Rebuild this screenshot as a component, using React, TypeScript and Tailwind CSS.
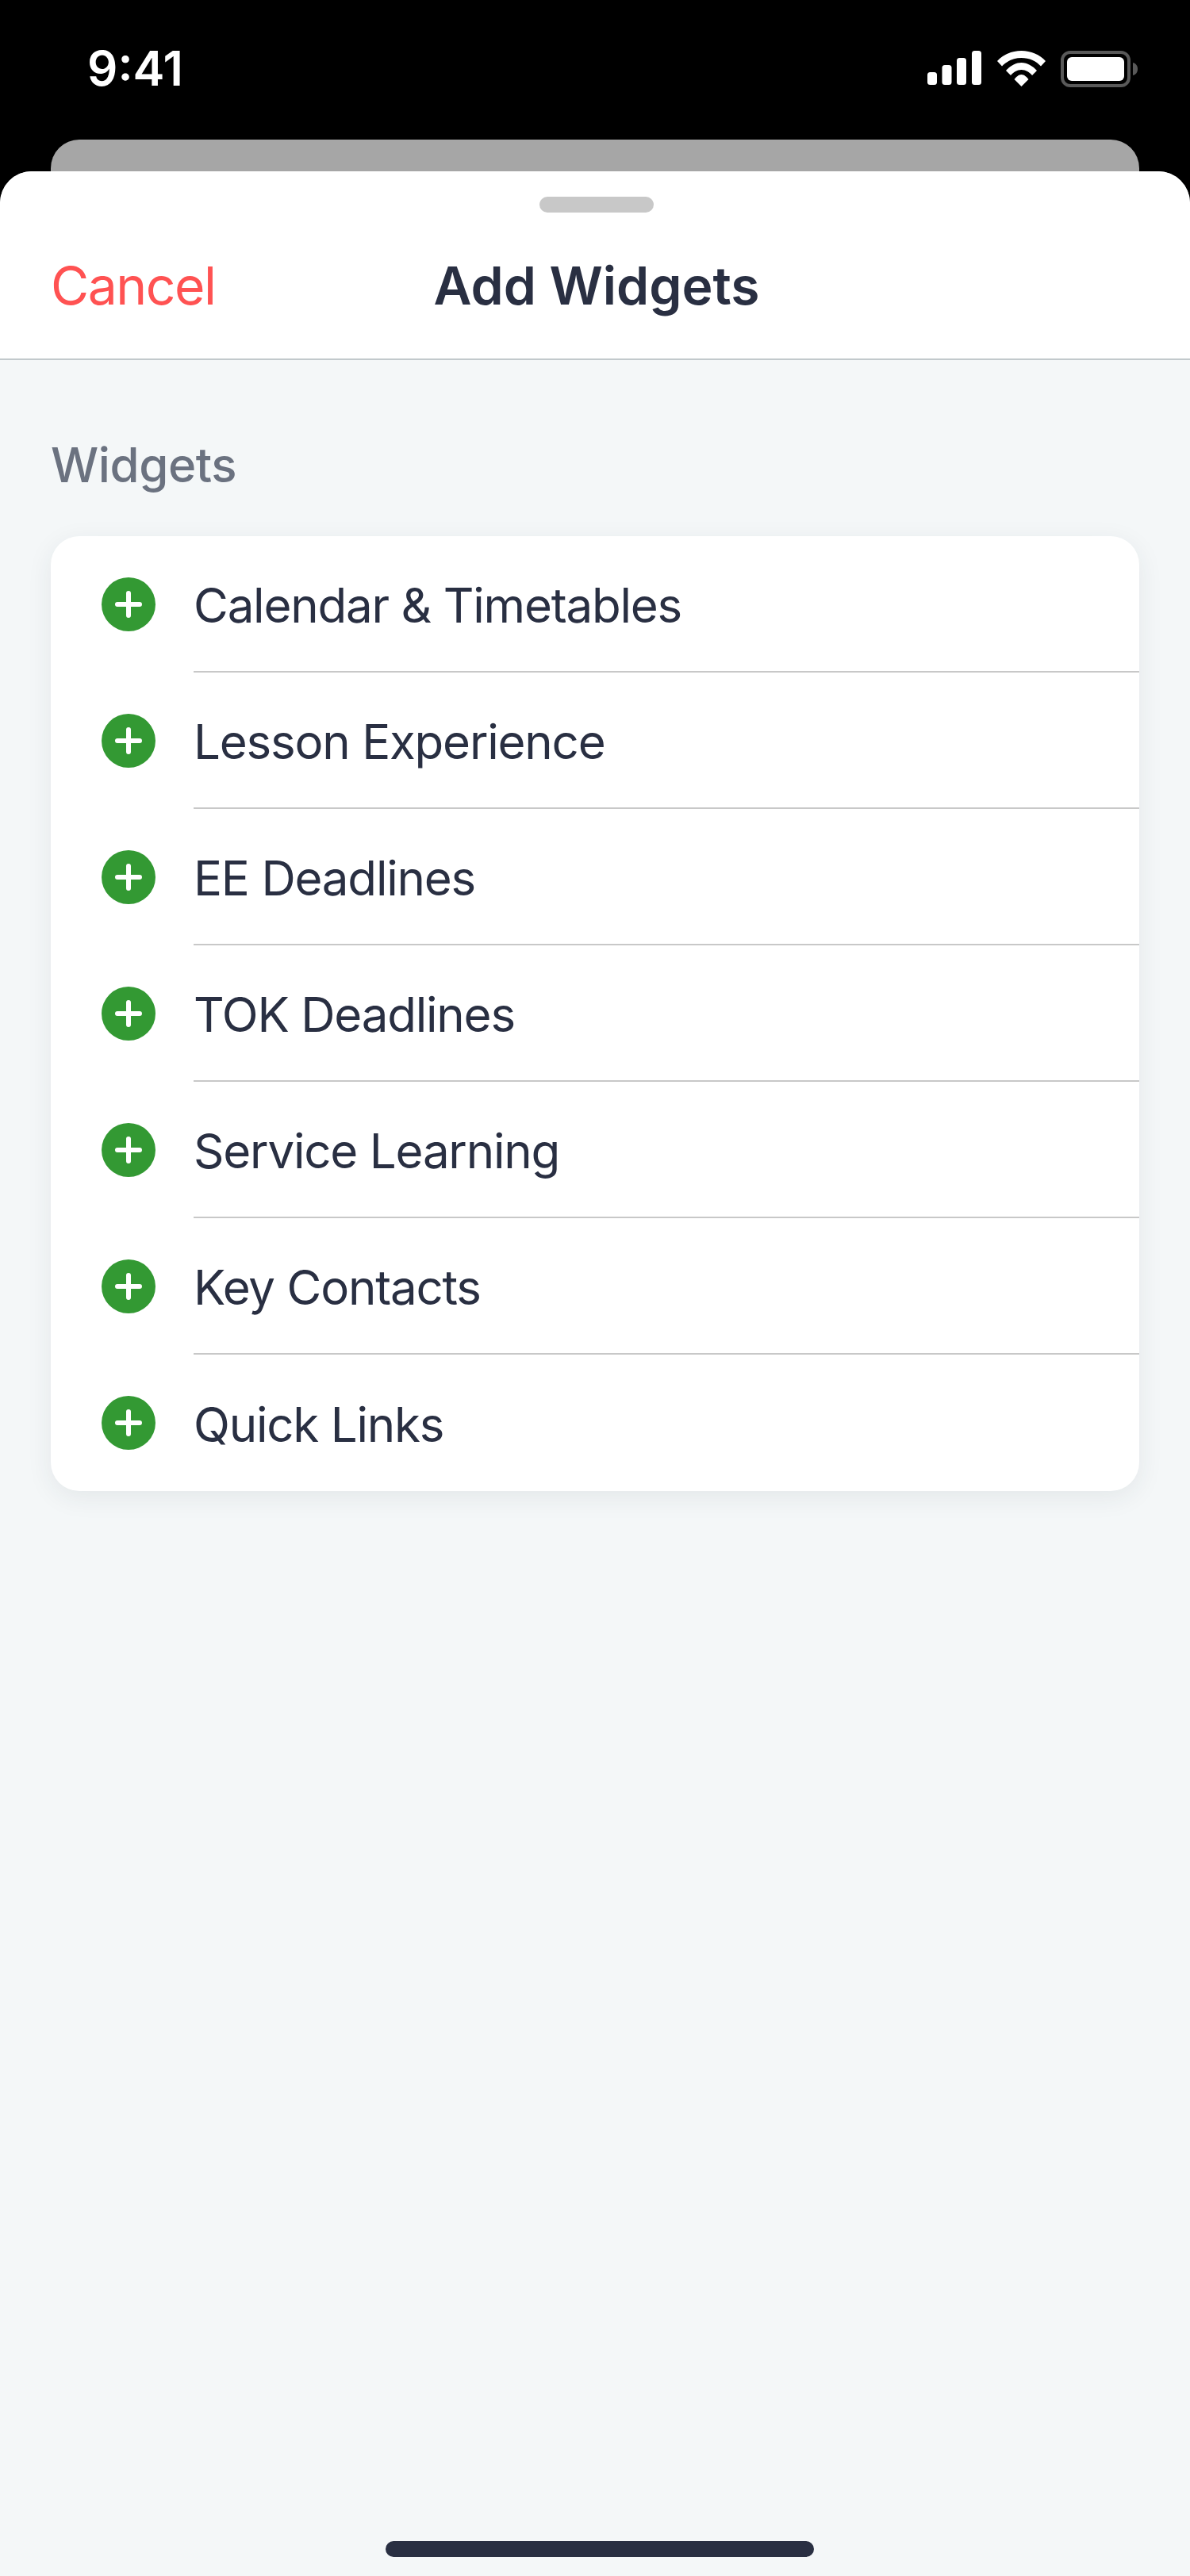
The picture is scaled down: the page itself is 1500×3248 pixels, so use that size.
const WIDGETS = [
  "Calendar & Timetables",
  "Lesson Experience",
  "EE Deadlines",
  "TOK Deadlines",
  "Service Learning",
  "Key Contacts",
  "Quick Links",
];

function SignalIcon() {
  return (
    <svg width="68" height="43" viewBox="0 0 68 43" fill="#fff">
      <rect x="0" y="27" width="12" height="16" rx="3.5" />
      <rect x="18.5" y="18" width="12" height="25" rx="3.5" />
      <rect x="37" y="9" width="12" height="34" rx="3.5" />
      <rect x="56" y="0" width="12" height="43" rx="3.5" />
    </svg>
  );
}

function WifiIcon() {
  return (
    <svg width="62" height="45" viewBox="0 0 62 45" fill="#fff">
      <path d="M0 13C7.500 4.800 18.500 0 30.500 0S53.500 4.800 61 13L55 19.500C49 13 40.500 9 30.500 9S12 13 6 19.500Z" />
      <path d="M11 25C16 19.500 23 15 30.500 15S45 19.500 50 25L44 31C40.500 27 36 24 30.500 24S20.500 27 17 31Z" />
      <path d="M21.500 36C24 33 27 30 30.500 30S37 33 39.500 36L30.500 45Z" />
    </svg>
  );
}

function BatteryIcon() {
  return (
    <svg width="98" height="46" viewBox="0 0 98 46">
      <rect x="2" y="2" width="84" height="42" rx="10" fill="none" stroke="#595959" strokeWidth="4" />
      <rect x="8" y="8" width="72" height="30" rx="6" fill="#fff" />
      <path d="M91 15c4 1 6 4 6 8s-2 7-6 8z" fill="#595959" />
    </svg>
  );
}

function PlusIcon() {
  return (
    <svg width="68" height="68" viewBox="0 0 68 68" className="shrink-0">
      <circle cx="34" cy="34" r="34" fill="#339933" />
      <path d="M34 20v28M20 34h28" stroke="#fff" strokeWidth="6" strokeLinecap="round" />
    </svg>
  );
}

function WidgetRow({ label, last }: { label: string; last: boolean }) {
  return (
    <div className="flex h-[172px] items-stretch pl-[64px]">
      <div className="flex w-[116px] shrink-0 items-center">
        <PlusIcon />
      </div>
      <div
        className={
          last
            ? "flex flex-1 items-center"
            : "flex flex-1 items-center border-b-2 border-[#c8c8c8]"
        }
      >
        <span className="pt-[3px] text-[60px] leading-none tracking-[-1.2px] text-[#292f42]">{label}</span>
      </div>
    </div>
  );
}

export default function App() {
  return (
    <div className="flex h-[3248px] w-[1500px] flex-col overflow-hidden bg-black font-[Inter,sans-serif]">
      <div className="flex h-[176px] shrink-0 items-start justify-between pl-[110px] pr-[65px] pt-[56px]">
        <span className="text-[60px] font-semibold leading-[60px] text-white">9:41</span>
        <div className="flex items-start pt-[8px]">
          <SignalIcon />
          <div className="ml-[20px] mr-[18px]">
            <WifiIcon />
          </div>
          <BatteryIcon />
        </div>
      </div>

      <div className="mx-[64px] h-[40px] shrink-0 rounded-t-[36px] bg-[#a6a6a6]" />

      <div className="flex min-h-0 flex-1 flex-col overflow-hidden rounded-t-[40px] bg-[#f4f7f8]">
        <header className="relative flex h-[238px] shrink-0 items-center justify-center border-b-2 border-[#c2c9cc] bg-white pt-[52px]">
          <div className="absolute left-[680px] top-[32px] h-[20px] w-[144px] rounded-full bg-[#c8c8c8]" />
          <span className="absolute left-[64px] text-[66px] leading-none tracking-[-1.5px] text-[#ff5252]">Cancel</span>
          <span className="pl-[4px] text-[66px] font-semibold leading-none text-[#292f42]">Add Widgets</span>
        </header>

        <div className="flex flex-1 flex-col px-[64px]">
          <h2 className="mt-[102px] text-[60px] font-medium leading-none tracking-[-0.4px] text-[#6b7280]">Widgets</h2>
          <div className="mt-[60px] rounded-[36px] bg-white shadow-[0_8px_32px_rgba(41,47,66,0.08)]">
            <div className="flex flex-col">
              {WIDGETS.map((w, i) => (
                <WidgetRow key={w} label={w} last={i === WIDGETS.length - 1} />
              ))}
            </div>
          </div>
          <div className="mb-[24px] ml-[422px] mt-auto h-[20px] w-[540px] rounded-full bg-[#292f42]" />
        </div>
      </div>
    </div>
  );
}
